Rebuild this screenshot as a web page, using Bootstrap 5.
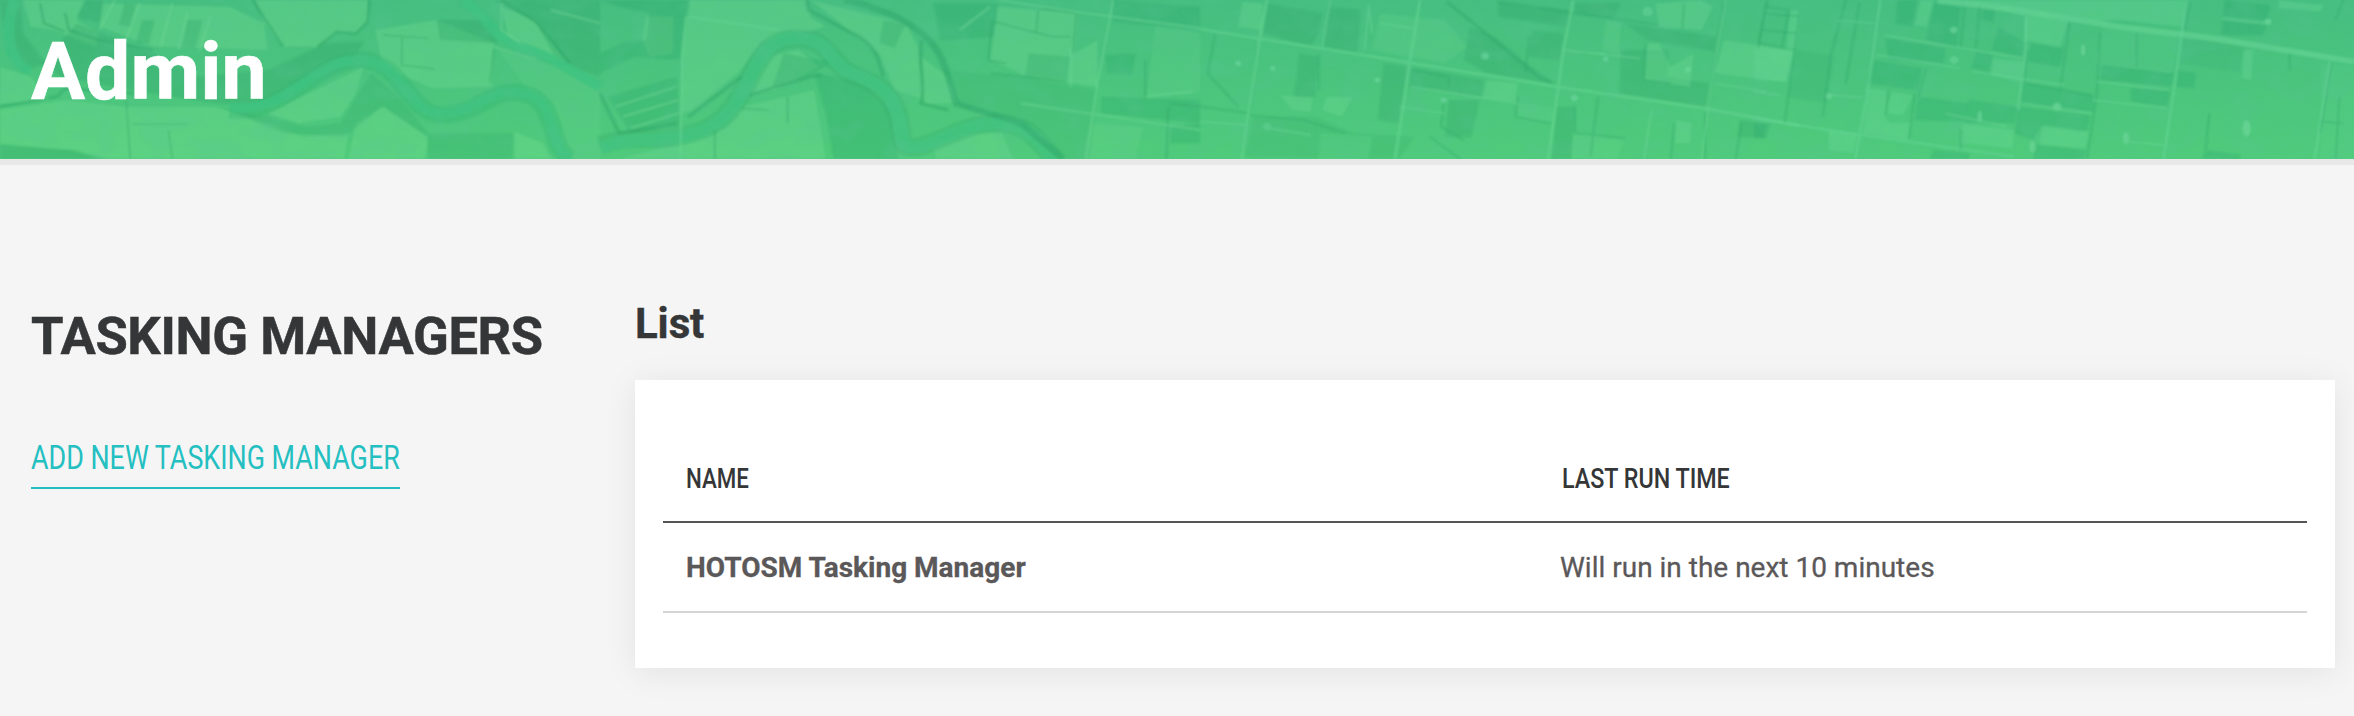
<!DOCTYPE html>
<html lang="en">
<head>
<meta charset="utf-8">
<meta name="viewport" content="width=device-width, initial-scale=1">
<title>Admin</title>
<link rel="stylesheet" href="https://cdn.jsdelivr.net/npm/bootstrap@5.3.0/dist/css/bootstrap.min.css">
<style>
body{background:#f5f5f5;color:#353637;font-family:Roboto,sans-serif;font-size:28px;min-height:716px;overflow:hidden}
.banner{height:165px;border-bottom:6px solid #e8e8e8;background:linear-gradient(#46be80,#50cb7b)}
.banner svg.terrain{inset:0;width:100%;height:159px}
.banner h1{font-size:80.5px;line-height:94px;font-weight:700;padding:25px 0 0 31px;color:#fff;letter-spacing:0;-webkit-text-stroke:.6px #fff}
.page-body{padding:134px 19px 0 31px}
.side{width:604px}
.side h2{font-size:52.5px;line-height:62px;font-weight:700;margin:6px 0 0;white-space:nowrap;letter-spacing:-.34px;-webkit-text-stroke:.5px #353637}
.side a{display:inline-block;width:369px;height:58px;margin-top:64px;border-bottom:2px solid #24bfc1;color:#24bfc1;font-size:34px;line-height:52px}
.cond{display:inline-block;white-space:nowrap;transform-origin:0 50%}
.main h3{font-size:42px;line-height:50px;font-weight:700;margin:0 0 31px;letter-spacing:-.1px;-webkit-text-stroke:.4px #353637}
.panel{background:#fff;height:288px;padding:50px 28px 0;box-shadow:0 4px 32px rgba(0,0,0,.08)}
.run-table{table-layout:fixed;width:100%;border-collapse:collapse}
.run-table th{height:92px;padding:6px 23px 0;border-bottom:2px solid #555556;font-weight:500;vertical-align:middle}
.run-table td{height:90px;padding:2px 23px 0;border-bottom:2px solid #d5d5d5;color:#5a5859;vertical-align:middle;-webkit-text-stroke:.3px #5a5859}
.run-table td:nth-child(2){padding-left:21px}
</style>
</head>
<body>
<header class="banner position-relative">
<svg class="terrain position-absolute" viewBox="0 0 2354 159" preserveAspectRatio="none" aria-hidden="true">
<defs>
<filter id="soft" x="0" y="0" width="100%" height="100%"><feGaussianBlur stdDeviation="1"/></filter>
<filter id="grain" x="0" y="0" width="100%" height="100%"><feTurbulence type="fractalNoise" baseFrequency=".035 .05" numOctaves="4" seed="8"/><feColorMatrix values="0 0 0 0 .1  0 0 0 0 .55  0 0 0 0 .3  1.5 0 0 0 -.6"/></filter>
</defs>
<g filter="url(#soft)" fill="none" opacity=".78">
<!-- river plain, west -->
<g transform="scale(.3827 .3333)">
<g fill="#76e094" fill-opacity=".42">
<path d="M60 0H220L200 60 260 100 250 140 140 90 80 80Z"/><path d="M0 200 80 230 130 300 0 310Z"/><path d="M0 330 170 300 330 320 560 320 700 370 790 410 910 400 900 477H250L200 450 100 440 0 430Z"/><path d="M670 0H960L965 60 930 100 880 95 830 140 740 140 690 70Z"/><path d="M980 90 1140 60 1290 130 1285 260 1130 265 1000 200Z"/><path d="M930 370 1000 320 1120 410 1110 477H910Z"/><path d="M700 340 950 200 930 280 890 350 780 370Z"/><path d="M1310 20 1400 60 1480 190 1430 180 1330 120Z"/><path d="M1345 395 1420 430 1440 477H1345Z"/><path d="M1300 150 1450 200 1568 280V477H1500L1400 300Z" fill-opacity=".2"/><path d="M270 10 600 20 690 70 700 150 400 140 260 80Z"/></g>
<g fill="#259e63" fill-opacity=".34"><path d="M0 0H55L60 100 120 190 60 215 20 170Z"/><path d="M200 70 420 170 520 230 700 210 850 130 950 125 920 190 820 250 700 320 560 310 340 270 160 230 110 190Z"/><path d="M570 320 700 350 800 380 890 370 970 220 1040 290 1120 400 1340 400V477H1120L1115 410 1000 320 900 410 740 400Z" fill-opacity=".25"/><path d="M1140 60 1290 60 1300 130 1150 120Z"/><path d="M1290 0H1568V230L1460 190 1400 70Z"/><path d="M0 435 190 450 280 477H0Z"/><path d="M325 10 355 15 340 80 310 75ZM370 60 405 60 390 130 355 130ZM490 60 530 60 510 145 475 140ZM225 0H270L260 70 200 50Z"/></g>
<path d="M600 330C750 350 820 180 940 180S1060 350 1160 345 1280 260 1370 280 1430 440 1490 477" stroke="#24a86a" stroke-width="50" stroke-opacity=".3"/>
<path d="M600 320C750 350 820 175 940 180S1060 350 1160 340 1280 260 1370 280 1430 440 1490 477M1210 0C1280 50 1290 120 1360 140S1470 200 1568 260M40 0C10 80 20 190 80 215" stroke="#3dc383" stroke-width="28" stroke-opacity=".85"/>
<path d="M660 0 700 70 740 140M965 0 960 65 930 100 880 95 830 140M170 40 180 90 260 120 400 150M0 320 150 290 170 265 350 280M1310 0 1400 65 1490 190M105 10 115 70 170 95" stroke="#269d62" stroke-opacity=".5" stroke-width="8"/>
<path d="M345 373H490M1000 105 1120 115M1050 110V195L1135 207M1290 145 1280 250M330 300 340 477M440 390 450 477" stroke="#289d60" stroke-opacity=".5" stroke-width="4"/>
<path d="M300 0 260 90M365 10 325 130M450 10 420 140M490 40 465 150M550 50 520 155M1310 10V90L1360 130M1440 30 1568 70M1290 140 1400 180" stroke="#82df9e" stroke-opacity=".6" stroke-width="4"/>
</g>
<!-- main meander -->
<g transform="translate(600) scale(.3827 .3333)">
<g fill="#77df95" fill-opacity=".4"><path d="M235 0H540L550 50 590 80 420 130 360 220 240 330 210 340 215 160Z"/><path d="M120 50 190 50 190 160 130 170 110 120Z"/><path d="M550 0 800 70 830 140 850 300 770 270 730 160 640 80Z"/><path d="M430 170 520 150 570 200 460 270 390 285Z"/><path d="M210 430 330 380 370 320 560 270 590 477H50Z"/><path d="M870 440 950 400 1050 400 1080 477H880Z"/><path d="M1040 20 1250 40 1240 160 1300 120 1300 260 1120 230 1020 180Z"/><path d="M840 170 910 230 930 310 850 310Z"/><path d="M1450 80 1568 100V280L1430 290Z" fill-opacity=".2"/><path d="M1280 370 1420 380 1400 477H1260Z" fill-opacity=".25"/></g>
<g fill="#26a064" fill-opacity=".3"><path d="M0 0H230L210 180 90 170 0 220V160L60 130 120 120 130 40 50 20Z"/><path d="M20 290 200 230 210 380 80 400Z"/><path d="M560 220 680 240 760 330 780 477H610L590 340Z"/><path d="M480 160 570 180 620 180 540 230 450 260Z"/><path d="M1320 165 1400 160 1390 225 1325 220Z"/><path d="M1340 0 1568 20V90L1340 65Z"/><path d="M870 10 1040 10 1030 110 890 120Z"/><path d="M900 210 1140 240 1300 270 1280 477H1200L1080 370 940 320Z" fill-opacity=".18"/><path d="M1120 160 1230 170 1220 240 1110 230Z"/><path d="M1310 290 1568 300V370L1310 340Z"/><path d="M1490 380 1568 370V430H1490Z"/><path d="M740 60 800 70 770 145 730 130Z"/></g>
<path d="M0 435C90 400 120 430 210 410S340 350 380 260 440 110 520 115 600 180 640 210 740 240 770 320 770 450 830 440 950 370 1040 370 1150 440 1190 477" stroke="#289f63" stroke-opacity=".3" stroke-width="54"/>
<path d="M0 445C90 405 120 430 210 410S340 350 380 260 440 110 520 115 600 180 640 210 740 240 770 320 770 450 830 440 950 370 1040 370 1150 440 1190 477" stroke="#41c381" stroke-width="37" stroke-opacity=".9"/>
<path d="M640 0C750 30 790 55 840 100S900 190 930 310L1100 370 1210 477" stroke="#279f66" stroke-opacity=".55" stroke-width="18"/>
<path d="M540 0 545 30 660 100C720 130 730 180 740 230M840 120C830 180 850 250 840 310L910 330M390 285 550 230 580 225M0 280 50 400 200 370M230 350 370 230" stroke="#289e63" stroke-opacity=".5" stroke-width="10"/>
<path d="M1025 60 1015 180 1060 190M1030 65 1180 110 1230 110M1145 30 1140 95M1155 25 1245 40 1235 160M1020 220 1220 245M300 390V477M490 290V370M370 325 440 330M1490 310 1568 320M1485 320 1480 477M1425 180V290" stroke="#289e61" stroke-opacity=".5" stroke-width="5"/>
<path d="M1040 0 1240 35 1568 85M1340 0 1330 70 1300 250 1270 477M225 50 215 160 210 477M230 50 470 90M40 320 200 260M60 350 205 300M80 385 205 340M940 90 1020 20M1430 290 1550 275M1100 310 1568 390M1230 140V260" stroke="#75de9b" stroke-opacity=".6" stroke-width="5"/>
</g>
<!-- central farmland -->
<g transform="translate(1200) scale(.3827 .3333)">
<g fill="#259e66" fill-opacity=".32"><path d="M175 10 320 40 310 100 290 140 165 100Z"/><path d="M335 20 420 30 410 160 320 140Z"/><path d="M260 160 310 170 300 290 245 290Z"/><path d="M480 190 545 200 520 370 465 360Z"/><path d="M705 80 770 110 865 200 930 250 750 220 690 180Z"/><path d="M865 100 950 110 940 180 860 170Z"/><path d="M980 10 1100 10 1080 60 980 40Z"/><path d="M1110 70 1350 110 1345 155 1170 120Z"/><path d="M1100 150 1225 150 1220 230 1330 250 1320 320 1095 280Z"/><path d="M550 200 740 240 735 290 545 260Z"/><path d="M650 300 730 300 710 410 640 410Z"/><path d="M930 320 980 320 970 477H920Z"/><path d="M140 350 300 350 400 400 560 410 520 477 120 470Z" fill-opacity=".2"/><path d="M780 0 970 30 960 80 780 50Z"/><path d="M1410 360 1480 370 1475 415 1405 410Z"/></g>
<g fill="#75df99" fill-opacity=".38"><path d="M110 5 165 10 160 90 100 80Z"/><path d="M1190 10 1310 0 1340 20 1310 90 1200 80Z"/><path d="M1370 120 1550 150 1530 245 1345 220Z"/><path d="M1170 130 1200 130 1230 200 1290 160 1280 260 1160 240Z"/><path d="M750 240 830 250 825 305 740 295Z"/><path d="M330 290 400 290 370 350 320 330Z"/><path d="M210 285 295 295 290 335 240 330Z"/><path d="M315 400 450 410 440 477H310Z" fill-opacity=".25"/><path d="M470 40 640 60 700 140 640 190 450 150Z" fill-opacity=".25"/><path d="M1060 60 1100 70 1095 165 1050 150Z" fill-opacity=".25"/><path d="M975 400 1110 420 1090 477H970Z" fill-opacity=".25"/><path d="M830 310 920 320 920 370 830 350Z" fill-opacity=".2"/><path d="M1245 360 1285 370 1280 430 1240 430Z"/></g>
<g stroke="#289f63" stroke-width="5" stroke-opacity=".45"><path d="M645 5 720 75 890 235 920 250" stroke-width="8"/><path d="M150 130 135 300 115 470M310 160V270M780 10 980 40 1200 75M1370 10 1350 140 1330 320M1480 10 1460 130 1530 145M1475 20 1540 30 1520 145M1265 10 1260 90M1165 130 1160 240 1230 250M870 95 950 105M860 110 850 220M830 290 825 350 920 370M0 320 130 340M130 345 270 360 380 400M600 410 680 477M1240 370 1230 477M1320 340V477M40 100 20 220 100 320M980 320V400L1110 415M550 210 650 230V260M1415 370 1400 477M640 290 630 380 690 420M1040 290 1020 470"/></g>
<path d="M0 87 160 117 400 160 930 260 1320 325 1568 377M175 0 155 120 110 477M575 0 548 185 510 477M975 0 950 150 935 270 910 477" stroke="#6cdc98" stroke-width="8" stroke-opacity=".6"/>
<path d="M340 0 320 140M1375 0 1350 150 1310 477M950 150 1150 175M550 260 830 310M1180 330 1160 477M970 155 1060 160M440 30 430 150M0 365 120 375M520 320 640 340M1345 250 1480 275M470 70 560 85M440 10 450 100M180 385 290 405" stroke="#77dea0" stroke-width="4" stroke-opacity=".6"/>
<g fill="#7bdfaa" opacity=".7"><circle cx="190" cy="205" r="7"/><circle cx="745" cy="168" r="10"/><circle cx="637" cy="300" r="8"/><circle cx="978" cy="294" r="9"/><circle cx="1060" cy="177" r="7"/><circle cx="1275" cy="209" r="8"/><circle cx="1170" cy="35" r="14" opacity=".7"/><circle cx="175" cy="380" r="10" opacity=".6"/><circle cx="100" cy="190" r="8"/><circle cx="463" cy="240" r="7"/></g>
</g>
<!-- eastern farmland -->
<g transform="translate(1754) scale(.3827 .3333)">
<g fill="#229e69" fill-opacity=".3"><path d="M345 115 500 145 495 190 350 180Z"/><path d="M310 180 440 205 430 270 295 250Z"/><path d="M110 150 210 170 190 310 90 290Z" fill-opacity=".2"/><path d="M725 130 810 145 800 200 715 185Z"/><path d="M910 195 1100 220 1090 260 905 240Z"/><path d="M985 262 1088 272 1080 320 985 305Z"/><path d="M700 250 890 285 885 335 695 310Z"/><path d="M690 320 880 345 870 395 750 380 730 420 680 400Z"/><path d="M1105 210 1155 220 1150 265 1100 260Z"/><path d="M1230 0 1350 15 1340 60 1225 50Z"/><path d="M1225 60 1340 75 1330 105 1220 105Z"/><path d="M580 150 625 165 615 215 570 205Z"/><path d="M560 300 690 320 680 370 550 370Z"/><path d="M600 20 630 30 625 65 595 60Z"/><path d="M640 80 710 130 700 170 620 150Z"/><path d="M430 290 560 310 550 365 420 360Z"/><path d="M730 430 870 450 860 477H730ZM470 450 565 460 560 477H460ZM1180 450 1270 465V477H1170ZM0 370 45 370 30 415H0Z"/><path d="M375 0H425L415 80 370 70ZM470 10 540 20 530 145 450 120Z"/><path d="M1120 110 1280 140 1270 215 1110 190Z" fill-opacity=".18"/></g>
<g fill="#72df9e" fill-opacity=".38"><path d="M530 0H1125L1120 80 950 60 820 65 800 140 705 120 710 50Z"/><path d="M0 140 105 155 85 245 0 240Z"/><path d="M300 265 350 270 340 345 355 370 410 365 400 420 285 400Z"/><path d="M360 275 415 285 390 345 345 340Z"/><path d="M625 175 705 185 695 245 620 225Z"/><path d="M435 0H470L450 80 420 75Z"/><path d="M545 370 680 390 675 445 545 430Z"/><path d="M755 375 875 395 865 445 745 435Z"/><path d="M1280 150 1305 150 1300 240 1275 235Z"/><path d="M1370 0 1490 15 1480 35 1370 25Z"/><path d="M915 80 1110 105 1090 220 890 190Z" fill-opacity=".15"/><path d="M195 390 270 400 260 460 195 450Z"/><path d="M95 30 125 30 110 145 85 145Z"/><path d="M1480 190 1568 200V477H1480Z" fill-opacity=".15"/></g>
<path d="M480 0 690 30 950 80 1200 115 1568 185" stroke="#68d696" stroke-width="18" stroke-opacity=".8"/>
<path d="M330 0 300 250 265 477M1130 0 1100 250 1070 477M0 355 280 405 680 470M710 50 710 150 690 330M1505 185 1465 477" stroke="#6ddda0" stroke-width="7" stroke-opacity=".55"/>
<path d="M35 0 10 145M20 90 110 100M30 40 120 50M120 30 100 200 80 370M240 0 200 170 180 350M275 10 240 250M550 20 540 145M590 20 580 145M715 150 705 250M825 65 800 270M905 100 895 290 870 477M1140 10 1125 90M1510 190 1480 400M1530 290 1520 477M350 270 345 345M420 280 405 415M450 205 430 290M540 390V450M710 250 880 285M1540 0 1520 60M1400 160V210M1000 100V200M1480 365 1540 370M1190 340 1180 450" stroke="#279f67" stroke-opacity=".45" stroke-width="5"/>
<path d="M340 105 700 175M320 165 540 205M570 215 810 255M895 245 1085 270M885 300 1080 325M700 310 880 340M1225 55 1340 70M220 62 315 70M0 275 70 285M200 285 285 292M980 425 1070 435M500 340 660 380" stroke="#75dea3" stroke-opacity=".6" stroke-width="4"/>
<g fill="#79dfa4" opacity=".7"><circle cx="522" cy="90" r="9"/><circle cx="792" cy="320" r="11"/><circle cx="1343" cy="65" r="9"/><circle cx="196" cy="288" r="8"/><ellipse cx="1287" cy="385" rx="11" ry="25"/><ellipse cx="972" cy="415" rx="8" ry="18"/><circle cx="523" cy="180" r="12" opacity=".7"/><ellipse cx="728" cy="440" rx="8" ry="18"/><ellipse cx="590" cy="350" rx="5" ry="18"/><ellipse cx="860" cy="150" rx="6" ry="18"/></g>
</g>
</g>
<rect width="2354" height="159" filter="url(#grain)" opacity=".4"/>
</svg>
<h1 class="position-relative m-0">Admin</h1>
</header>
<main class="page-body d-flex">
<aside class="side flex-shrink-0">
<h2>TASKING MANAGERS</h2>
<a href="#" class="text-decoration-none"><span class="cond" data-w="369">ADD NEW TASKING MANAGER</span></a>
</aside>
<section class="main flex-grow-1">
<h3>List</h3>
<div class="panel">
<table class="run-table">
<colgroup><col style="width:876px"><col></colgroup>
<thead><tr><th><span class="cond" data-w="63">NAME</span></th><th><span class="cond" data-w="168">LAST RUN TIME</span></th></tr></thead>
<tbody><tr><td class="fw-bold">HOTOSM Tasking Manager</td><td>Will run in the next 10 minutes</td></tr></tbody>
</table>
</div>
</section>
</main>
<script src="https://cdn.jsdelivr.net/npm/bootstrap@5.3.0/dist/js/bootstrap.bundle.min.js"></script>
<script>
document.querySelectorAll('.cond').forEach(el => {
  el.style.transform = 'scaleX(' + el.dataset.w / el.offsetWidth + ')';
});
</script>
</body>
</html>
